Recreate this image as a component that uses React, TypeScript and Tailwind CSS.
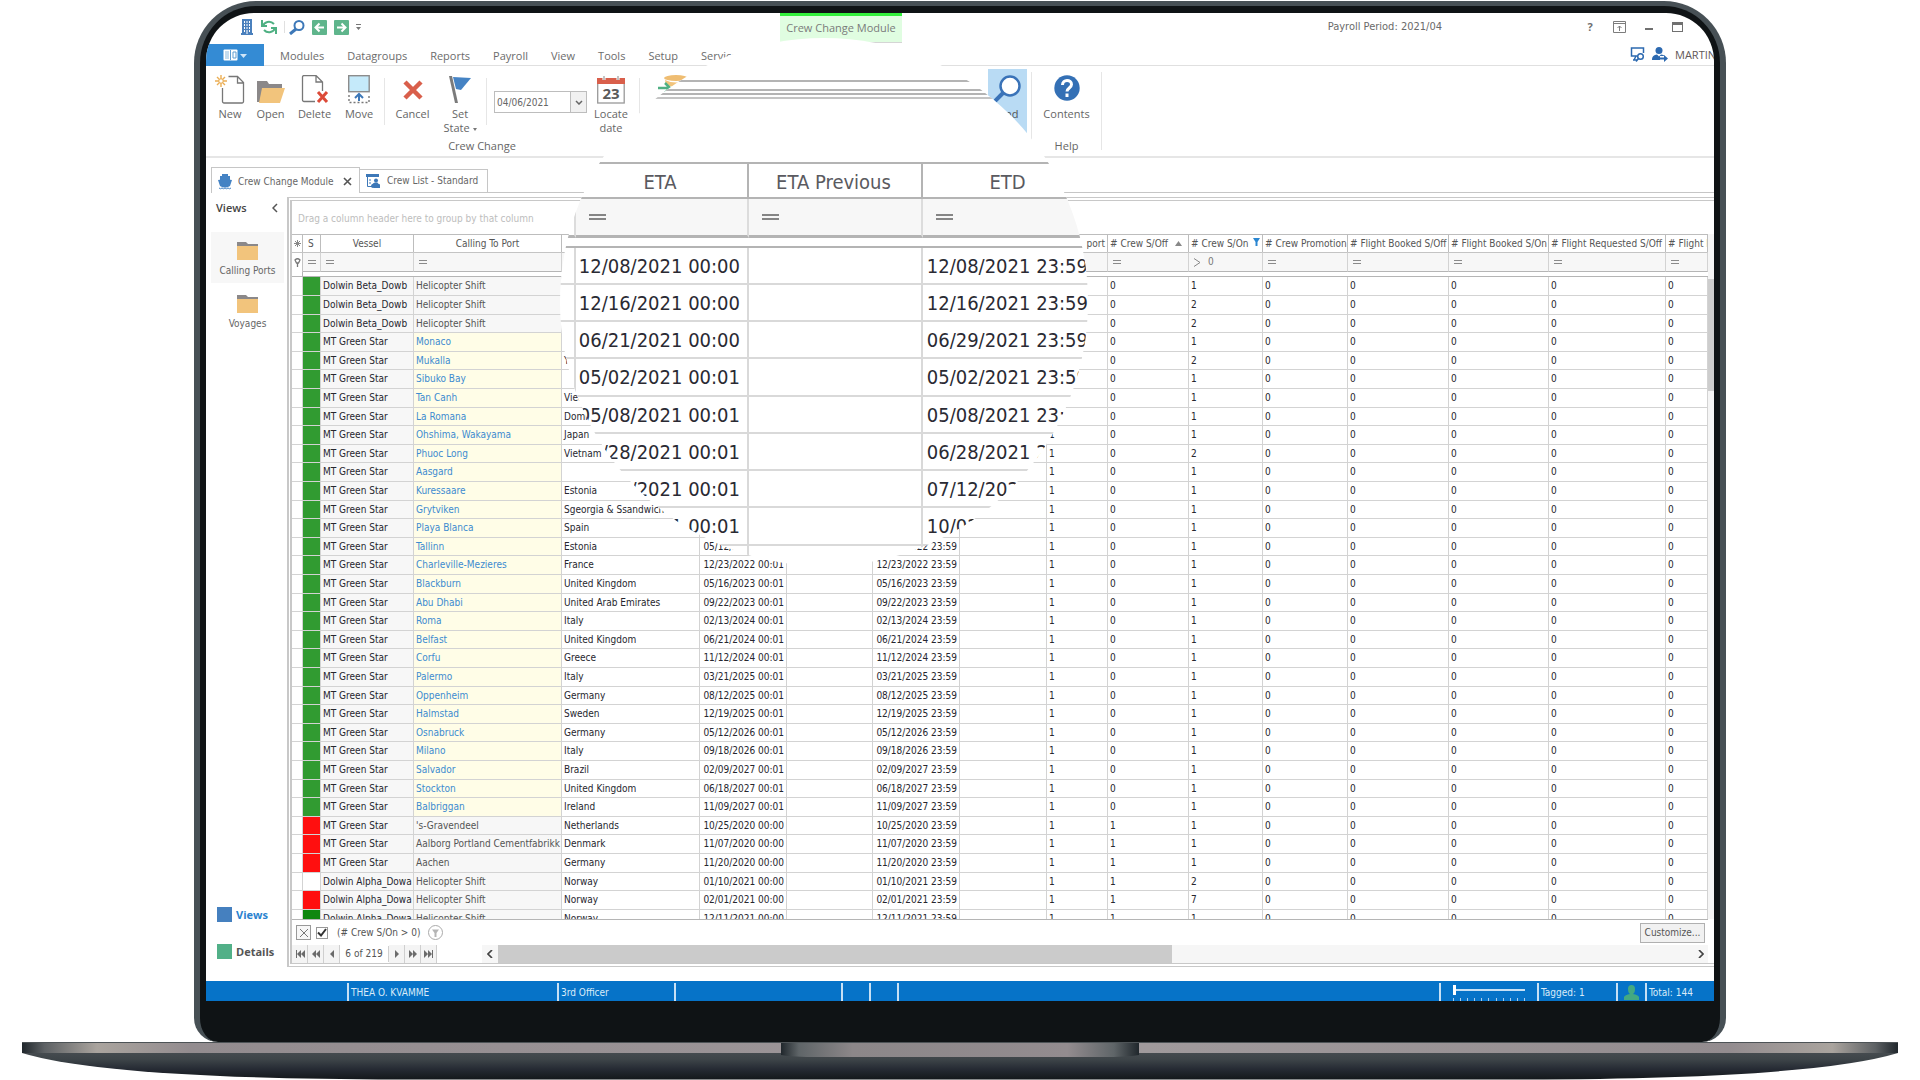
import type { ReactNode } from "react";

type Row = {
  state: "green" | "dark" | "red" | "none";
  vessel: string;
  port: string;
  link: boolean;
  country: string;
  eta: string;
  etd: string;
  calls: string;
  off: number;
  on: number;
};

const star = (port: string, country: string, day: string, on = 1, calls = "1"): Row => ({
  state: "green", vessel: "MT Green Star", port, link: true, country,
  eta: day && day + " 00:01", etd: day && day + " 23:59", calls, off: 0, on,
});
const past = (port: string, country: string, day: string): Row => ({
  state: "red", vessel: "MT Green Star", port, link: false, country, eta: day + " 00:00", etd: day + " 23:59", calls: "1", off: 1, on: 1,
});
const heli = (state: Row["state"], vessel: string, country: string, day: string, off: number, on: number): Row => ({
  state, vessel, port: "Helicopter Shift", link: false, country,
  eta: day && day + " 00:00", etd: day && day + " 23:59", calls: day && "1", off, on,
});

const rows: Row[] = [
  heli("green", "Dolwin Beta_Dowb", "", "", 0, 1),
  heli("green", "Dolwin Beta_Dowb", "", "", 0, 2),
  heli("green", "Dolwin Beta_Dowb", "", "", 0, 2),
  star("Monaco", "", "", 1, ""),
  star("Mukalla", "Yemen", "", 2, ""),
  star("Sibuko Bay", "", "", 1, ""),
  star("Tan Canh", "Vietnam", "", 1, ""),
  star("La Romana", "Dominican", "", 1, ""),
  star("Ohshima, Wakayama", "Japan", ""),
  star("Phuoc Long", "Vietnam", "", 2),
  star("Aasgard", "", ""),
  star("Kuressaare", "Estonia", ""),
  star("Grytviken", "Sgeorgia & Ssandwich", ""),
  star("Playa Blanca", "Spain", ""),
  star("Tallinn", "Estonia", "05/12/2022"),
  star("Charleville-Mezieres", "France", "12/23/2022"),
  star("Blackburn", "United Kingdom", "05/16/2023"),
  star("Abu Dhabi", "United Arab Emirates", "09/22/2023"),
  star("Roma", "Italy", "02/13/2024"),
  star("Belfast", "United Kingdom", "06/21/2024"),
  star("Corfu", "Greece", "11/12/2024"),
  star("Palermo", "Italy", "03/21/2025"),
  star("Oppenheim", "Germany", "08/12/2025"),
  star("Halmstad", "Sweden", "12/19/2025"),
  star("Osnabruck", "Germany", "05/12/2026"),
  star("Milano", "Italy", "09/18/2026"),
  star("Salvador", "Brazil", "02/09/2027"),
  star("Stockton", "United Kingdom", "06/18/2027"),
  star("Balbriggan", "Ireland", "11/09/2027"),
  past("'s-Gravendeel", "Netherlands", "10/25/2020"),
  past("Aalborg Portland Cementfabrikk", "Denmark", "11/07/2020"),
  past("Aachen", "Germany", "11/20/2020"),
  heli("none", "Dolwin Alpha_Dowa", "Norway", "01/10/2021", 1, 2),
  heli("red", "Dolwin Alpha_Dowa", "Norway", "02/01/2021", 1, 7),
  heli("dark", "Dolwin Alpha_Dowa", "Norway", "12/11/2021", 1, 1),
];

const stateColor = { green: "bg-[#319b31]", dark: "bg-[#0f870f]", red: "bg-[#ff0f0f]", none: "bg-white" };

const lensRows = [
  ["12/08/2021 00:00", "12/08/2021 23:59"],
  ["12/16/2021 00:00", "12/16/2021 23:59"],
  ["06/21/2021 00:00", "06/29/2021 23:59"],
  ["05/02/2021 00:01", "05/02/2021 23:59"],
  ["05/08/2021 00:01", "05/08/2021 23:59"],
  ["06/28/2021 00:01", "06/28/2021 23:59"],
  ["07/12/2021 00:01", "07/12/2021 23:59"],
  ["10/02/2021 00:01", "10/02/2021 23:59"],
  ["", ""],
];

const Eq = () => <span className="block h-1 w-2 border-y border-[#8a8a8a]" />;
const BigEq = () => <span className="block h-[6px] w-[17px] border-y-2 border-[#858585]" />;

function TitleBar() {
  return (
    <header className="flex h-[31px] items-start">
      <div className="flex flex-1 items-center gap-[7px] pl-[34px] pt-[6px]">
        <button aria-label="Company" className="h-4 w-[14px]">
          <svg viewBox="0 0 14 16" className="h-4 w-[14px]">
            <path d="M2 0h10v14h1v2H1v-2h1z" fill="#4a80bd" />
            <path d="M4 2h1v2H4zM6.500 2h1v2h-1zM9 2h1v2H9zM4 5h1v2H4zM6.500 5h1v2h-1zM9 5h1v2H9zM4 8h1v2H4zM6.500 8h1v2h-1zM9 8h1v2H9zM4 11h1v2H4zM6.500 11h1v4h-1zM9 11h1v2H9z" fill="#fff" />
          </svg>
        </button>
        <button aria-label="Refresh" className="h-4 w-4">
          <svg viewBox="0 0 16 16" className="h-4 w-4" fill="none" stroke="#4fb083" strokeWidth="2">
            <path d="M2 7C3 3 9 1 13 5" />
            <path d="M14 9C13 13 7 15 3 11" />
            <path d="M1 1v6h5M15 15V9h-5" />
          </svg>
        </button>
        <span className="h-3 w-px bg-[#e0e0e0]" />
        <button aria-label="Find" className="ml-[-3px] h-[15px] w-4">
          <svg viewBox="0 0 16 15" className="h-[15px] w-4" fill="none" stroke="#3d78b8" strokeWidth="2">
            <circle cx="10" cy="5.500" r="4.500" />
            <path d="M7 9L1 14" strokeWidth="3" />
          </svg>
        </button>
        <button aria-label="Back" className="h-[15px] w-[15px]">
          <svg viewBox="0 0 15 15" className="h-[15px] w-[15px]"><rect width="15" height="15" rx="1" fill="#5fb58c" /><path d="M12 7.500H4M7.500 3.500l-4 4 4 4" stroke="#fff" strokeWidth="2" fill="none" /></svg>
        </button>
        <button aria-label="Forward" className="h-[15px] w-[15px]">
          <svg viewBox="0 0 15 15" className="h-[15px] w-[15px]"><rect width="15" height="15" rx="1" fill="#5fb58c" /><path d="M3 7.500h8M7.500 3.500l4 4-4 4" stroke="#fff" strokeWidth="2" fill="none" /></svg>
        </button>
        <button aria-label="More commands" className="h-[6px] w-[5px]">
          <svg viewBox="0 0 5 6" className="block h-[6px] w-[5px]"><path d="M0 0h5v1H0zM0 3h5L2.500 6z" fill="#777" /></svg>
        </button>
      </div>
      <div className="h-[30px] w-[122px] border-b border-t-[3px] border-b-[#d5d5d5] border-t-[#33f03c] bg-[#e0fde1] pt-[4px] text-center text-[11px] leading-4 text-[#7b7b7b]">
        Crew Change Module
      </div>
      <div className="flex w-[812px] items-center justify-end gap-4 pr-[31px] pt-[6px] text-[11px] leading-4 text-[#6a6a6a]">
        <span className="mr-[125px] font-['DejaVu_Sans_Condensed',sans-serif]">Payroll Period: 2021/04</span>
        <button aria-label="Help" className="w-[14px] font-bold text-[#6f6f6f]">?</button>
        <button aria-label="Ribbon options" className="h-3 w-[13px]">
          <svg viewBox="0 0 13 12" className="block h-3 w-[13px]" fill="none" stroke="#7d7d7d"><path d="M.5.500h12v11H.5zM.5 2.500h12M6.500 10V5M4.500 7l2-2 2 2" /></svg>
        </button>
        <button aria-label="Minimize" className="flex h-3 w-[14px] items-center justify-center"><span className="mt-1 h-[2px] w-2 bg-[#707070]" /></button>
        <button aria-label="Maximize" className="h-[10px] w-[11px] border border-t-[3px] border-[#707070]" />
      </div>
    </header>
  );
}

function Menu() {
  return (
    <nav className="flex h-[22px] border-b border-[#e0e0e0] text-[11px] leading-6 text-[#6c6c6c]">
      <button aria-label="Application menu" className="flex h-[22px] w-[58px] items-center justify-center bg-[#348bd4]">
        <svg viewBox="0 0 24 12" className="h-3 w-6">
          <rect x=".5" y=".5" width="14" height="11" rx="1" fill="#fff" />
          <path d="M2 3h4M2 5h4M2 7h4M2 9h4" stroke="#8ab8dc" />
          <path d="M7.500 1v10M10 3h3v6h-3z" stroke="#5f9dd1" fill="none" />
          <path d="M17 5h7l-3.500 4z" fill="#cfe5f7" />
        </svg>
      </button>
      <div className="flex flex-1 gap-[23px] pl-4">
        {["Modules", "Datagroups", "Reports", "Payroll", "View", "Tools", "Setup", "Services"].map((m) => (
          <button key={m}>{m}</button>
        ))}
      </div>
      <div className="flex w-[84px] items-center gap-[7px] whitespace-nowrap">
        <svg viewBox="0 0 15 15" className="h-[15px] w-[15px] shrink-0" fill="none" stroke="#2c69b0" strokeWidth="1.500">
          <path d="M7 9H1.500V1h12v5" /><path d="M3 13h4M6 9L4 13" /><circle cx="10.500" cy="9.500" r="2.800" /><path d="M8.500 11.500L6 14.500" />
        </svg>
        <svg viewBox="0 0 16 15" className="h-[15px] w-4 shrink-0" fill="#2c69b0">
          <circle cx="7" cy="3.500" r="3.500" /><path d="M0 13c0-4 2-5 5-5.500l2 2 2-2c2 .300 3 .500 3.500 1.500H8v4z" /><path d="M8 10.500h4V8l4 3.500-4 3.500v-2.500H8z" />
        </svg>
        <span className="text-[#5f5757]">MARTIN</span>
      </div>
    </nav>
  );
}

function Tool({ label, width, children }: { label: ReactNode; width: string; children: ReactNode }) {
  return (
    <button className={`flex flex-col items-center ${width}`}>
      <span className="flex h-[30px] items-center justify-center">{children}</span>
      <span className="mt-[2px] block leading-[14px]">{label}</span>
    </button>
  );
}

const Sep = () => <span className="mt-3 h-[47px] w-px bg-[#e6e6e6]" />;

function Ribbon() {
  return (
    <section aria-label="Ribbon" className="flex h-[92px] items-stretch border-b-2 border-[#e6e6e6] text-[11px] text-[#666]">
      <div className="flex w-[433px] flex-col">
        <div className="flex h-[73px] items-start">
          <div className="flex items-start pl-1 pt-[9px]">
            <Tool label="New" width="w-10">
              <svg viewBox="0 0 30 30" className="h-[30px] w-[30px]" fill="none">
                <path d="M13.500 1.500h9l6 6v19a1.500 1.500 0 0 1-1.500 1.500H9a1.500 1.500 0 0 1-1.500-1.500V13M22.500 2v6h6" stroke="#777" strokeWidth="1.300" />
                <path d="M6 0v4M6 8v4M0 6h4M8 6h4M2 2l2.500 2.500M7.500 7.500L10 10M10 2L7.500 4.500M4.500 7.500L2 10" stroke="#ecaf55" strokeWidth="1.400" />
                <circle cx="6" cy="6" r="2.200" stroke="#ecaf55" />
              </svg>
            </Tool>
            <Tool label="Open" width="w-[41px]">
              <svg viewBox="0 0 28 24" className="mt-[3px] h-6 w-7">
                <path d="M0 1h10l2 3h13v4H6L3 22H0z" fill="#8b8889" /><path d="M5 8h23l-5 15H2z" fill="#f2c47c" />
              </svg>
            </Tool>
            <Tool label="Delete" width="w-[47px]">
              <svg viewBox="0 0 28 30" className="h-[30px] w-7" fill="none">
                <path d="M14 26.500H3A1.500 1.500 0 0 1 1.500 25V2A1.500 1.500 0 0 1 3 .5h12l6.500 6.500v9M15 1v6h6.500" stroke="#777" strokeWidth="1.300" />
                <path d="M17 17l9 10M26 17l-9 10" stroke="#dc4a38" strokeWidth="3" />
              </svg>
            </Tool>
            <Tool label="Move" width="w-[42px]">
              <svg viewBox="0 0 22 30" className="h-[30px] w-[22px]" fill="none">
                <rect x=".7" y=".7" width="20.500" height="16" fill="#c5eafa" stroke="#8c8c8c" strokeWidth="1.400" />
                <path d="M1 20v7.500h20V20" stroke="#777" strokeWidth="1.400" strokeDasharray="2 2" />
                <path d="M11 26v-6M7 23l4-4 4 4" stroke="#3d78b8" strokeWidth="2" />
              </svg>
            </Tool>
          </div>
          <span className="ml-1" />
          <Sep />
          <div className="flex items-start pt-[9px]">
            <Tool label="Cancel" width="w-[55px]">
              <svg viewBox="0 0 20 20" className="h-5 w-5"><path d="M2 2l16 16M18 2L2 18" stroke="#d95f4b" strokeWidth="4.500" /></svg>
            </Tool>
            <Tool label={<>Set<br />State <span className="inline-block border-x-2 border-t-[3px] border-x-transparent border-t-[#777] align-middle" /></>} width="w-10">
              <svg viewBox="0 0 22 28" className="h-7 w-[22px]"><path d="M0 0h3l6 27H6z" fill="#7b7b7b" /><path d="M4 1l18 1-10 12-5-1z" fill="#4583c4" /></svg>
            </Tool>
          </div>
          <span className="ml-[6px]" />
          <Sep />
          <div className="ml-[7px] mt-[25px] flex h-[22px] w-[93px] border border-[#bdbdbd]">
            <input aria-label="Change date" defaultValue="04/06/2021" className="w-0 flex-1 pl-[2px] font-['DejaVu_Sans_Condensed',sans-serif] text-[10px] text-[#666] outline-none" />
            <button aria-label="Pick date" className="flex w-4 items-center justify-center border-l border-[#bdbdbd] bg-[#f1f1f1]">
              <svg viewBox="0 0 8 5" className="h-[5px] w-2"><path d="M1 1l3 3 3-3" fill="none" stroke="#666" strokeWidth="1.500" /></svg>
            </button>
          </div>
          <div className="pt-[9px]">
            <Tool label={<>Locate<br />date</>} width="w-12">
              <svg viewBox="0 0 28 28" className="h-7 w-7">
                <rect x=".7" y="3" width="26.500" height="24" fill="#fff" stroke="#999" strokeWidth="1.300" />
                <path d="M0 2h28v6H0z" fill="#d95f4b" /><path d="M7 0v4M21 0v4" stroke="#fff" strokeWidth="3" /><path d="M7 0v4M21 0v4" stroke="#888" />
                <text x="14" y="23" textAnchor="middle" fontFamily="Open Sans, sans-serif" fontWeight="700" fontSize="15" fill="#5a5a5a">23</text>
              </svg>
            </Tool>
          </div>
        </div>
        <span className="pl-[119px] text-center leading-[14px]">Crew Change</span>
      </div>
      <div className="flex flex-1 justify-between">
        <div className="flex">
          <span className="mt-3 h-9 w-px bg-[#e6e6e6]" />
          <svg viewBox="0 0 34 26" className="ml-[18px] mt-[9px] h-[26px] w-[34px]">
            <ellipse cx="18" cy="3" rx="12" ry="3" fill="#efbd72" /><path d="M7 5q11 5 23 0v5q-11 4-22 0z" fill="#f2c47c" />
            <path d="M0 13h11M7 8l5 5-5 5" fill="none" stroke="#4fb083" strokeWidth="2.500" />
            <path d="M0 23h30" stroke="#c4c4c4" strokeWidth="2" />
          </svg>
        </div>
        <div className="flex w-[726px]">
          <button className="mt-[3px] flex h-[66px] w-[39px] flex-col items-center bg-[#b9dbf4] pt-[6px] text-[#555]">
            <svg viewBox="0 0 28 28" className="h-7 w-7" fill="none">
              <circle cx="16" cy="11" r="9.500" fill="#fff" stroke="#3a73b8" strokeWidth="2.500" /><path d="M9 18l-8 8" stroke="#3a73b8" strokeWidth="4" />
            </svg>
            <span className="mt-1 leading-[14px]">Find</span>
          </button>
          <span className="ml-1 mt-[6px] h-[68px] w-px bg-[#e6e6e6]" />
          <div className="flex w-[69px] flex-col items-center pt-[9px]">
            <button className="flex flex-col items-center">
              <svg viewBox="0 0 26 26" className="h-[26px] w-[26px]">
                <circle cx="13" cy="13" r="12.700" fill="#3470b5" />
                <path d="M8.500 10c0-6 9-6 9-.5 0 3.500-4.500 3.500-4.500 7M13 18.500V22" fill="none" stroke="#fff" strokeWidth="3" />
              </svg>
              <span className="mt-[6px] leading-[14px]">Contents</span>
            </button>
            <span className="mt-[18px] leading-[14px]">Help</span>
          </div>
          <span className="mt-[6px] h-[78px] w-px bg-[#e6e6e6]" />
        </div>
      </div>
    </section>
  );
}

function DocTabs() {
  return (
    <div role="tablist" className="flex h-[35px] items-end pl-[5px] pt-[9px] text-[10px] leading-4 text-[#666]">
      <div role="tab" aria-selected="true" className="flex h-[26px] w-[149px] items-center gap-[6px] border border-b-0 border-[#c6c6c6] pl-[6px] pt-[2px]">
        <svg viewBox="0 0 14 16" className="h-4 w-[14px]" fill="#4583c4">
          <path d="M4 0h6v2h2v4H2V2h2z" /><path d="M0 6l7-1 7 1-2 6q-5 3-10 0z" /><path d="M1 14q1.500 1.500 3 0 1.500 1.500 3 0 1.500 1.500 3 0 1.500 1.500 3 0" fill="none" stroke="#4583c4" />
        </svg>
        Crew Change Module
        <button aria-label="Close tab" className="ml-[3px] h-[9px] w-[9px]"><svg viewBox="0 0 9 9" className="block h-[9px] w-[9px]"><path d="M1 1l7 7M8 1L1 8" stroke="#555" strokeWidth="1.600" /></svg></button>
      </div>
      <div role="tab" aria-selected="false" className="flex h-6 w-[128px] items-center gap-[6px] border border-l-0 border-[#c6c6c6] pl-[6px]">
        <svg viewBox="0 0 15 15" className="h-[15px] w-[15px]" fill="#3d78b8">
          <path d="M0 0h13v3H0z" /><path d="M1.500 3v9.500H7M3 6h2M3 9h2" stroke="#3d78b8" fill="none" /><circle cx="10" cy="6.500" r="2" /><path d="M6 12q0-3 3-3.500h2q1 0 1 1l2 1v3.500H8z" /><circle cx="7" cy="12" r="2" />
        </svg>
        Crew List - Standard
      </div>
      <div className="h-px flex-1 bg-[#c6c6c6]" />
    </div>
  );
}

const Folder = () => (
  <svg viewBox="0 0 21 18" className="h-[18px] w-[21px]"><path d="M0 0h9l2 2h10v2H0z" fill="#8b8889" /><path d="M0 4h21v14H0z" fill="#f2c47c" /></svg>
);

function Sidebar() {
  return (
    <aside className="flex w-[81px] flex-col text-[10px] leading-[14px] text-[#666]">
      <div className="flex items-center justify-between pl-[10px] pr-[9px] pt-1 text-[#444]">
        <b className="font-['Open_Sans',sans-serif] text-[11px] font-semibold">Views</b>
        <button aria-label="Collapse" className="h-[10px] w-[6px]"><svg viewBox="0 0 6 10" className="block h-[10px] w-[6px]"><path d="M5 1L1 5l4 4" fill="none" stroke="#555" strokeWidth="1.500" /></svg></button>
      </div>
      <button className="ml-[5px] mt-[17px] flex h-[51px] w-[73px] flex-col items-center bg-[#f7f7f7] pt-[10px]"><Folder /><span className="mt-1 whitespace-nowrap">Calling Ports</span></button>
      <button className="ml-[5px] mt-[2px] flex h-[51px] w-[73px] flex-col items-center pt-[10px]"><Folder /><span className="mt-1">Voyages</span></button>
      <div className="mt-auto flex flex-col gap-[22px] pb-2 pl-[11px] font-['Open_Sans',sans-serif] text-[11px] font-bold">
        <button className="flex items-center gap-1 text-[#2a82cf]"><span className="h-[15px] w-[15px] bg-[#4580bf]" />Views</button>
        <button className="flex items-center gap-1 text-[#555]"><span className="h-[15px] w-[15px] bg-[#52b088]" />Details</button>
      </div>
    </aside>
  );
}

const cell = "overflow-hidden border-b border-r border-[#d3d3d3] px-[2px]";
const head = "overflow-hidden border-r border-[#bdbdbd] border-t px-[2px] text-left font-normal";
const filt = "border-r border-t border-b border-[#d3d3d3] border-t-[#c4c4c4] border-b-[#b5b5b5] bg-[#f7f7f7] pl-[5px]";

function Grid() {
  const counts = ["# Crew Promotion", "# Flight Booked S/Off", "# Flight Booked S/On", "# Flight Requested S/Off", "# Flight Requested S/On"];
  return (
    <table className="w-full table-fixed border-separate border-spacing-0 whitespace-nowrap text-[10px] leading-4 text-[#26262e]">
      <colgroup>
        <col className="w-[11px]" /><col className="w-[18px]" /><col className="w-[93px]" /><col className="w-[148px]" /><col className="w-[138px]" />
        <col className="w-[87px]" /><col className="w-[86px]" /><col className="w-[87px]" /><col className="w-[87px]" /><col className="w-[61px]" />
        <col className="w-[81px]" /><col className="w-[74px]" /><col className="w-[85px]" /><col className="w-[101px]" /><col className="w-[100px]" />
        <col className="w-[117px]" /><col />
      </colgroup>
      <thead className="text-[#555]">
        <tr className="h-[18px]">
          <th className={head}><svg viewBox="0 0 7 7" className="h-[7px] w-[7px]" stroke="#888"><path d="M3.500 0v7M0 3.500h7M1 1l5 5M6 1L1 6" /></svg></th>
          <th className={head}><span className="pl-[3px]">S</span></th>
          <th className={head}><span className="block text-center">Vessel</span></th>
          <th className={head}><span className="block text-center">Calling To Port</span></th>
          <th className={head} />
          <th className={head} />
          <th className={head} />
          <th className={head} />
          <th className={head} />
          <th className={head}><span className="block text-right">port</span></th>
          <th className={head}><span className="flex items-center justify-between pr-1"># Crew S/Off <svg viewBox="0 0 7 5" className="h-[5px] w-[7px]"><path d="M0 5h7L3.500 0z" fill="#888" /></svg></span></th>
          <th className={head}><span className="flex items-center justify-between"># Crew S/On <svg viewBox="0 0 7 8" className="mb-1 h-2 w-[7px]"><path d="M0 0h7L4.500 4v4h-2V4z" fill="#2a86d1" /></svg></span></th>
          {counts.map((c) => <th key={c} className={head}>{c}</th>)}
        </tr>
        <tr className="h-5">
          <td className="border-r border-t border-[#c4c4c4]"><svg viewBox="0 0 7 9" className="ml-[2px] h-[9px] w-[7px]"><path d="M1 2q2.500-2.500 5 0L4.500 5H2.500z" fill="none" stroke="#777" strokeWidth="1.300" /><path d="M3.500 5v4" stroke="#777" strokeWidth="1.300" /></svg></td>
          {Array.from({ length: 16 }, (_, i) => (
            <td key={i} className={filt}>
              {i === 10 ? <span className="flex items-center gap-[7px] text-[#777]"><svg viewBox="0 0 7 9" className="h-[9px] w-[7px]"><path d="M0 .5l6 4-6 4" fill="none" stroke="#888" /></svg>0</span> : <Eq />}
            </td>
          ))}
        </tr>
        <tr className="h-[5px]"><td className="border-b border-r border-[#b5b5b5]" /><td colSpan={16} className="border-b border-[#b5b5b5]" /></tr>
      </thead>
      <tbody className="[&>tr]:h-[19px] [&>tr:nth-child(5n)]:h-[18px] [&>tr:nth-child(5n+3)]:h-[18px]">
        {rows.map((r, i) => (
          <tr key={i}>
            <td className={cell} />
            <td className={`border-b border-r border-[#d3d3d3] ${stateColor[r.state]}`} />
            <td className={`${cell} bg-[#f7f7f7]`}>{r.vessel}</td>
            <td className={`${cell} ${r.link ? "bg-[#fffde7]" : "bg-[#f7f7f7] text-[#555]"}`}>{r.link ? <a href="#port" className="text-[#3d8bd0]">{r.port}</a> : r.port}</td>
            <td className={cell}>{r.country}</td>
            <td className={`${cell} text-right`}>{r.eta}</td>
            <td className={cell} />
            <td className={`${cell} text-right`}>{r.etd}</td>
            <td className={cell} />
            <td className={cell}>{r.calls}</td>
            <td className={cell}>{r.off}</td>
            <td className={cell}>{r.on}</td>
            {counts.map((c) => <td key={c} className={cell}>0</td>)}
          </tr>
        ))}
      </tbody>
    </table>
  );
}

function NavButton({ label, d }: { label: string; d: string }) {
  return (
    <button aria-label={label} className="flex h-[18px] w-4 items-center justify-center border-r border-[#cfcfcf] bg-[#f4f4f4]">
      <svg viewBox="0 0 10 8" className="h-2 w-[10px]"><path d={d} fill="#6b6b6b" /></svg>
    </button>
  );
}

function GridPanel() {
  return (
    <main className="flex min-w-0 flex-1 flex-col border-y-4 border-l-[5px] border-double border-[#c8c8c8]">
      <p className="h-[33px] pl-[6px] pt-[10px] text-[10px] leading-4 text-[#bdbdbd]">Drag a column header here to group by that column</p>
      <div className="flex min-h-0 flex-1">
        <div className="min-w-0 flex-1 overflow-hidden"><Grid /></div>
        <div className="w-[6px] bg-[#f5f5f5] pt-[45px]"><div className="h-28 bg-[#cdcdcd]" /></div>
      </div>
      <div className="mr-[6px] flex h-[26px] items-center border-t border-[#b5b5b5] pl-1 pr-[3px] text-[10px] text-[#555]">
        <button aria-label="Clear filter" className="flex h-[15px] w-[15px] items-center justify-center border border-[#999] bg-[#f7f7f7]"><svg viewBox="0 0 8 8" className="h-2 w-2"><path d="M0 0l8 8M8 0L0 8" stroke="#777" /></svg></button>
        <label className="flex items-center">
          <input type="checkbox" defaultChecked className="peer ml-[5px] h-3 w-3 appearance-none border border-[#999]" />
          <svg viewBox="0 0 10 9" className="-ml-[11px] h-[9px] w-[10px]"><path d="M1 4.500L4 7.500 9 1" fill="none" stroke="#333" strokeWidth="2" /></svg>
          <span className="ml-[10px]">(# Crew S/On &gt; 0)</span>
        </label>
        <button aria-label="Recent filters" className="ml-2 h-[15px] w-[15px]"><svg viewBox="0 0 15 15" className="block h-[15px] w-[15px]"><circle cx="7.500" cy="7.500" r="7" fill="none" stroke="#aaa" /><path d="M4 4.500h7L8.500 8v4h-2V8z" fill="#b5b5b5" /></svg></button>
        <button className="ml-auto h-5 w-[65px] border border-[#b0b0b0] bg-[#f1f1f1]">Customize...</button>
      </div>
      <div className="mr-[6px] flex h-[18px] items-center text-[10px] leading-4 text-[#555]">
        <NavButton label="First" d="M1 0v8h1V0zM6 0v8L2 4zM10 0v8L6 4z" />
        <NavButton label="Previous page" d="M5 0v8L1 4zM9 0v8L5 4z" />
        <NavButton label="Previous" d="M7 0v8L3 4z" />
        <span className="w-[49px] whitespace-nowrap border-r border-[#cfcfcf] text-center">6 of 219</span>
        <NavButton label="Next" d="M3 0v8l4-4z" />
        <NavButton label="Next page" d="M1 0v8l4-4zM5 0v8l4-4z" />
        <NavButton label="Last" d="M0 0v8l4-4zM4 0v8l4-4zM8 0v8h1V0z" />
        <div className="ml-[45px] flex h-[18px] flex-1 items-center bg-[#f6f6f6]">
          <button aria-label="Scroll left" className="w-4"><svg viewBox="0 0 6 8" className="ml-[5px] h-2 w-[6px]"><path d="M5 0L1 4l4 4" fill="none" stroke="#444" strokeWidth="1.700" /></svg></button>
          <div className="h-full w-[55%] bg-[#cbcbcb]" />
          <button aria-label="Scroll right" className="ml-auto w-4"><svg viewBox="0 0 6 8" className="ml-[6px] h-2 w-[6px]"><path d="M1 0l4 4-4 4" fill="none" stroke="#444" strokeWidth="1.700" /></svg></button>
        </div>
      </div>
    </main>
  );
}

const stat = "h-[18px] border-l-2 border-[#c7e0f4] pl-[2px] leading-[20px]";

function StatusBar() {
  return (
    <footer className="flex h-5 items-end bg-[#0673c8] pl-[141px] text-[10px] text-[#d9ebf8]">
      <span className={`${stat} w-[210px]`}>THEA O. KVAMME</span>
      <span className={`${stat} w-[117px]`}>3rd Officer</span>
      <span className={`${stat} w-[167px]`} />
      <span className={`${stat} w-7`} />
      <span className={`${stat} w-7`} />
      <span className={`${stat} flex-1`} />
      <div className={`${stat} flex w-[98px] flex-col pl-[12px] pr-[12px]`}>
        <input type="range" aria-label="Zoom" defaultValue={0} className="mt-[6px] h-[2px] w-full appearance-none bg-[#c7e0f4] [&::-webkit-slider-thumb]:h-[10px] [&::-webkit-slider-thumb]:w-[3px] [&::-webkit-slider-thumb]:appearance-none [&::-webkit-slider-thumb]:bg-white" />
        <div className="mt-[7px] flex justify-between">{Array.from({ length: 11 }, (_, i) => <span key={i} className="h-[3px] w-px bg-[#a9cdec]" />)}</div>
      </div>
      <span className={`${stat} w-[79px]`}>Tagged: 1</span>
      <span className={`${stat} w-[29px] pl-[6px]`}><svg viewBox="0 0 15 15" className="mt-[2px] h-[15px] w-[15px]"><path d="M4 4q0-4 3.500-4T11 4q0 4-2 5 5 1 6 3v3H0v-3q1-2 6-3-2-1-2-5" fill="#43a982" /></svg></span>
      <span className={`${stat} w-[69px]`}>Total: 144</span>
    </footer>
  );
}

function Lens() {
  const c = "border-b-2 border-r-2 border-[#d9d9d9] pr-[7px] text-right";
  return (
    <div className="absolute left-[354px] top-[25px] h-[528px] w-[528px] overflow-hidden rounded-full bg-white">
      <div className="mt-[42px] h-[2px] bg-[#b4b4b4]" />
      <div className="mt-[7px] h-[2px] bg-[#b4b4b4]" />
      <div className="mt-[2px] h-[2px] bg-[#b4b4b4]" />
      <div className="mt-[2px] h-[2px] bg-[#c4c4c4]" />
      <table className="mt-[63px] w-[537px] table-fixed border-separate border-spacing-0 whitespace-nowrap text-[20px] leading-6 text-[#2a2a33]">
        <colgroup><col className="w-4" /><col className="w-[173px]" /><col className="w-[174px]" /><col className="w-[174px]" /></colgroup>
        <thead className="text-[#5a5a60]">
          <tr className="h-[37px]">
            <th className="border-y-2 border-[#b4b4b4]" />
            {["ETA", "ETA Previous", "ETD"].map((h) => <th key={h} className="border-y-2 border-r-2 border-[#b4b4b4] pr-[3px] pt-[2px] font-normal">{h}</th>)}
          </tr>
          <tr className="h-[39px]">
            <td className="border-b-[3px] border-r-2 border-b-[#b4b4b4] border-r-[#dcdcdc]" />
            {[0, 1, 2].map((i) => <td key={i} className="border-b-[3px] border-r-2 border-b-[#b4b4b4] border-r-[#dcdcdc] bg-[#f7f7f7] pl-[13px]"><BigEq /></td>)}
          </tr>
          <tr className="h-[10px]"><td colSpan={4} className="border-b-2 border-[#b4b4b4]" /></tr>
        </thead>
        <tbody className="[&>tr:nth-child(4n)]:h-[38px] [&>tr]:h-[37px]">
          {lensRows.map(([a, b], i) => (
            <tr key={i}><td className={c} /><td className={c}>{a}</td><td className={c} /><td className={c}>{b}</td></tr>
          ))}
        </tbody>
      </table>
    </div>
  );
}

function LaptopBase() {
  return (
    <svg viewBox="0 0 1876 38" preserveAspectRatio="none" className="block h-[38px] w-full" aria-hidden="true">
      <defs>
        <linearGradient id="deck"><stop offset="0" stopColor="#20272c" /><stop offset=".012" stopColor="#5d6164" /><stop offset=".04" stopColor="#aaa49e" /><stop offset=".09" stopColor="#938c8f" /><stop offset=".3" stopColor="#989194" /><stop offset=".6" stopColor="#a09a9c" /><stop offset=".91" stopColor="#938c8f" /><stop offset=".965" stopColor="#aaa49e" /><stop offset=".988" stopColor="#5d6164" /><stop offset="1" stopColor="#20272c" /></linearGradient>
        <linearGradient id="under" x2="0" y2="1"><stop offset="0" stopColor="#454b4f" /><stop offset=".25" stopColor="#3d4448" /><stop offset=".6" stopColor="#262b34" /><stop offset="1" stopColor="#14181b" /></linearGradient>
        <linearGradient id="notch"><stop offset="0" stopColor="#20272c" /><stop offset=".05" stopColor="#5f6568" /><stop offset=".2" stopColor="#8c8789" /><stop offset=".8" stopColor="#938c8f" /><stop offset=".93" stopColor="#5f6568" /><stop offset="1" stopColor="#20272c" /></linearGradient>
      </defs>
      <path d="M0 11H1876Q1790 37 1500 37.500H376Q86 37 0 11z" fill="url(#under)" />
      <path d="M0 0H1876V11H0z" fill="url(#deck)" />
      <path d="M0 0H1876V1H0z" fill="#4d5356" />
      <path d="M759 1H1117V13Q1105 15 1080 15H796Q771 15 759 13z" fill="url(#notch)" />
    </svg>
  );
}

export default function App() {
  return (
    <div className="flex h-screen min-h-[1080px] flex-col overflow-hidden bg-white pt-px font-['Open_Sans',sans-serif]">
      <div className="mx-[194px] flex min-h-0 flex-1 flex-col rounded-b-[24px] rounded-t-[62px] border-x-[6px] border-t-[5px] border-[#475055] bg-[#0f1315] px-[6px] pb-[41px] pt-[7px]">
        <div className="relative flex min-h-0 flex-1 flex-col overflow-hidden rounded-t-[48px] bg-white">
          <TitleBar />
          <Menu />
          <Ribbon />
          <div className="flex min-h-0 flex-1 flex-col font-['DejaVu_Sans_Condensed','DejaVu_Sans',sans-serif]">
            <DocTabs />
            <div className="flex min-h-0 flex-1 pb-[14px] pt-1">
              <Sidebar />
              <GridPanel />
            </div>
            <StatusBar />
          </div>
          <div className="contents font-['DejaVu_Sans_Condensed','DejaVu_Sans',sans-serif]"><Lens /></div>
        </div>
      </div>
      <div className="shrink-0 px-[22px]"><LaptopBase /></div>
    </div>
  );
}
